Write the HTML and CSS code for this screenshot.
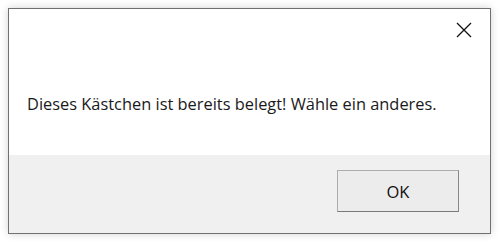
FILE: index.html
```html
<!DOCTYPE html>
<html lang="de">
<head>
<meta charset="utf-8">
<link rel="stylesheet" href="styles.css">
</head>
<body>
<div class="dialog">
  <div class="main">
    <div class="titlebar">
      <button class="close" aria-label="Schließen">
        <svg width="16" height="16" viewBox="0 0 16 16"><path d="M1 1 L15 15 M15 1 L1 15" stroke="#111" stroke-width="1.3" fill="none"/></svg>
      </button>
    </div>
    <p class="message">Dieses Kästchen ist bereits belegt! Wähle ein anderes.</p>
  </div>
  <div class="footer">
    <button class="ok">OK</button>
  </div>
</div>
</body>
</html>
```
FILE: styles.css
```css
html, body {
  margin: 0;
  padding: 0;
  background: #ffffff;
}
body {
  width: 500px;
  height: 242px;
  padding: 8px 0 0 8px;
  box-sizing: border-box;
  font-family: "Open Sans", "Noto Sans", sans-serif;
}
.dialog {
  width: 483px;
  height: 226px;
  box-sizing: border-box;
  border: 1px solid #707070;
  display: flex;
  flex-direction: column;
  box-shadow: 0 0 8px rgba(0,0,0,0.18);
}
.main {
  background: #fff;
  height: 146px;
  display: flex;
  flex-direction: column;
}
.titlebar {
  height: 42px;
  display: flex;
  justify-content: flex-end;
  align-items: flex-start;
}
.close {
  width: 46px;
  height: 42px;
  border: none;
  background: transparent;
  padding: 0;
  display: flex;
  align-items: center;
  justify-content: center;
  margin-right: 3px;
}
.message {
  margin: 0;
  padding: 42px 0 0 18px;
  font-size: 16.4px;
  line-height: 22px;
  color: #1a1a1a;
}
.footer {
  flex: 1;
  background: #f0f0f0;
  display: flex;
  justify-content: flex-end;
  align-items: flex-start;
  padding: 15px 31px 0 0;
}
.ok {
  width: 122px;
  height: 42px;
  box-sizing: border-box;
  border: 1px solid #adadad;
  border-bottom-color: #7a7a7a;
  border-right-color: #8a8a8a;
  background: #ececec;
  font-family: "Open Sans", "Noto Sans", sans-serif;
  font-size: 16.5px;
  color: #111;
  padding: 0;
}
```
